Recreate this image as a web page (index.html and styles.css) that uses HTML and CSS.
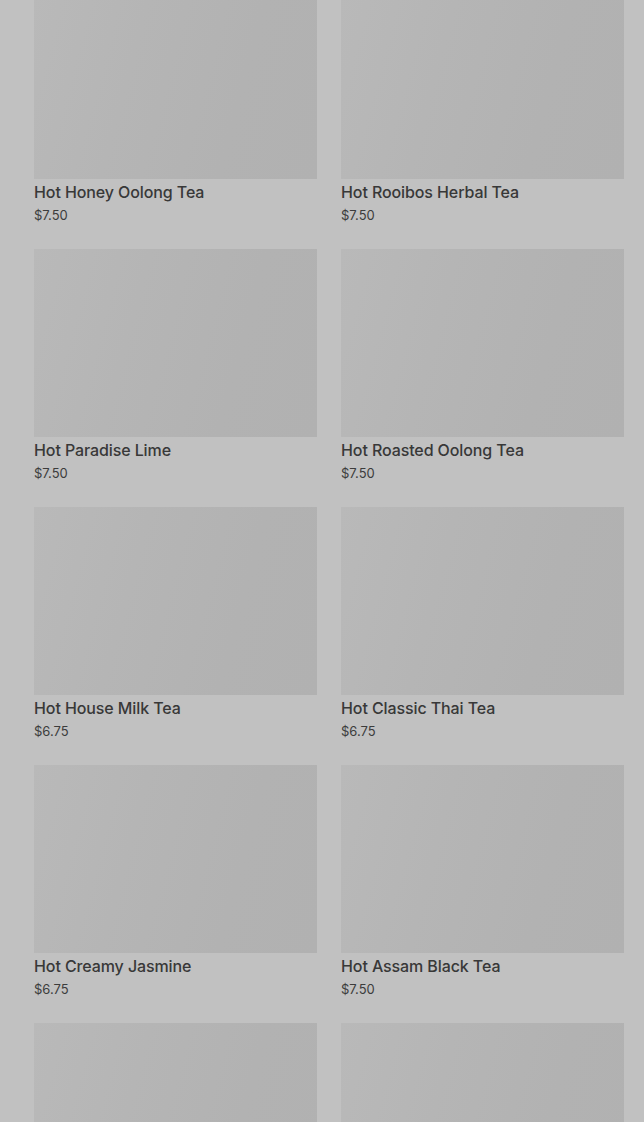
FILE: index.html
```html
<!DOCTYPE html>
<html lang="en">
<head>
    <meta charset="UTF-8">
    <meta name="viewport" content="width=device-width, initial-scale=1.0">
    <title>Hot Drinks</title>
    <link rel="stylesheet" href="styles.css">
</head>
<body>
    <div class="menu-grid">
        <div class="item">
            <div class="item-image"></div>
            <p class="item-name">Hot Honey Oolong Tea</p>
            <p class="item-price">$7.50</p>
        </div>
        <div class="item">
            <div class="item-image"></div>
            <p class="item-name">Hot Rooibos Herbal Tea</p>
            <p class="item-price">$7.50</p>
        </div>
        <div class="item">
            <div class="item-image"></div>
            <p class="item-name">Hot Paradise Lime</p>
            <p class="item-price">$7.50</p>
        </div>
        <div class="item">
            <div class="item-image"></div>
            <p class="item-name">Hot Roasted Oolong Tea</p>
            <p class="item-price">$7.50</p>
        </div>
        <div class="item">
            <div class="item-image"></div>
            <p class="item-name">Hot House Milk Tea</p>
            <p class="item-price">$6.75</p>
        </div>
        <div class="item">
            <div class="item-image"></div>
            <p class="item-name">Hot Classic Thai Tea</p>
            <p class="item-price">$6.75</p>
        </div>
        <div class="item">
            <div class="item-image"></div>
            <p class="item-name">Hot Creamy Jasmine</p>
            <p class="item-price">$6.75</p>
        </div>
        <div class="item">
            <div class="item-image"></div>
            <p class="item-name">Hot Assam Black Tea</p>
            <p class="item-price">$7.50</p>
        </div>
        <div class="item">
            <div class="item-image"></div>
        </div>
        <div class="item">
            <div class="item-image"></div>
        </div>
    </div>
</body>
</html>
```

FILE: styles.css
```css
body {
    margin: 0;
    font-family: Inter, Roboto, Arial, sans-serif;
    background-color: #c1c1c1; /* dimmed page */
    color: #383838;
    height: 100vh;
    overflow: hidden;
}
.menu-grid {
    display: grid;
    grid-template-columns: 283px 283px;
    column-gap: 24px;
    row-gap: 25px;
    padding: 0 20px 0 34px;
    margin-top: -9px; /* list is scrolled a little */
}
.item-image {
    height: 188px;
    background: linear-gradient(105deg, #b9b9b9 0%, #b5b5b5 35%, #b2b2b2 70%, #b1b1b1 100%);
}
.item-name {
    margin: 3px 0 0 0;
    font-size: 16px;
    font-weight: 500;
    line-height: 20px;
    letter-spacing: -0.1px;
}
.item-price {
    margin: 4px 0 0 0;
    font-size: 13px;
    line-height: 18px;
    color: #3c3c3c;
}
```
